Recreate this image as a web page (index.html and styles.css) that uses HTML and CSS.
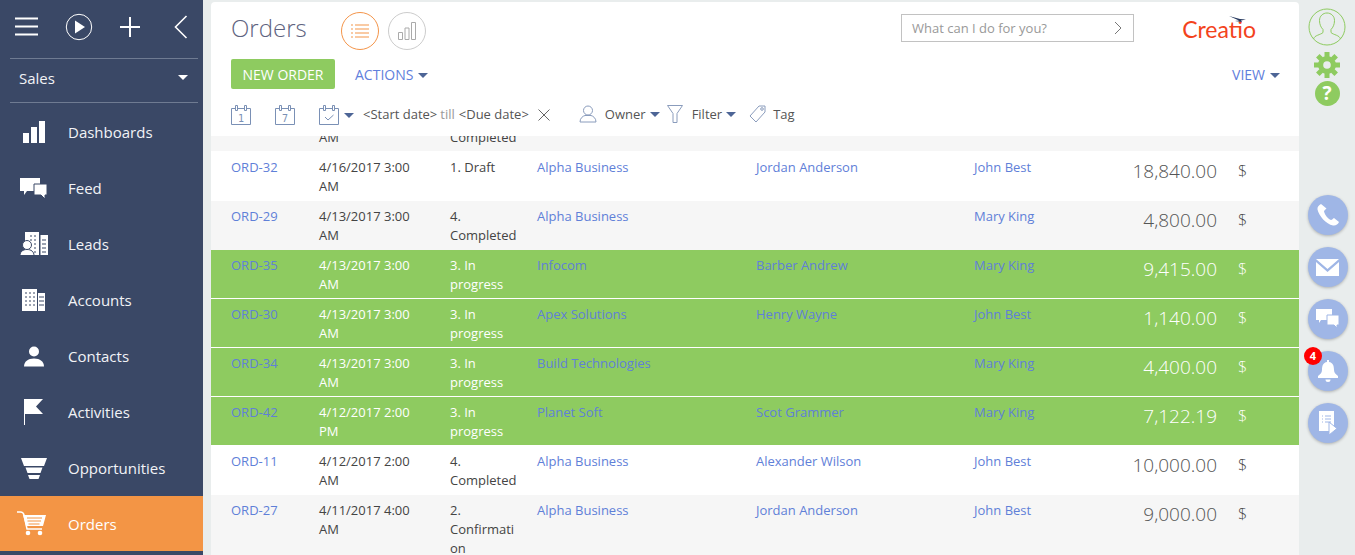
FILE: index.html
```html
<!DOCTYPE html>
<html lang="en">
<head>
  <meta charset="UTF-8">
  <title>Orders</title>
  <link rel="stylesheet" href="styles.css">
</head>
<body>
<div class="app">
  <!-- left menu -->
  <aside class="sidebar">
    <div class="side-tools">
      <svg width="24" height="20" viewBox="0 0 24 20"><path d="M0 1.500h23M0 9.500h23M0 17.500h23" stroke="#fff" stroke-width="2"/></svg>
      <svg class="tool-play" width="28" height="28" viewBox="0 0 28 28"><circle cx="14" cy="14" r="12.700" fill="none" stroke="#fff" stroke-width="1"/><path d="M10 7.500 20 14 10 20.500z" fill="#fff"/></svg>
      <svg class="tool-plus" width="22" height="22" viewBox="0 0 22 22"><path d="M11 1v20M1 11h20" stroke="#fff" stroke-width="2"/></svg>
      <svg class="tool-back" width="14" height="24" viewBox="0 0 14 24"><path d="M12.500 1 1.500 12l11 11" fill="none" stroke="#fff" stroke-width="1.600"/></svg>
    </div>
    <div class="workplace"><span>Sales</span><i class="caret caret-white"></i></div>
    <nav class="menu">
      <a class="menu-item"><span class="menu-icon"><svg width="24" height="24" viewBox="0 0 24 24"><path d="M1 13h6v10H1zM9 7h6v16H9zM17 1h6v22h-6z" fill="#fff"/></svg></span>Dashboards</a>
      <a class="menu-item"><span class="menu-icon"><svg width="28" height="22" viewBox="0 0 28 22"><path d="M0 1h20v13H7l-3 4v-4H0z" fill="#fff"/><path d="M14 7h13v11h-2v4l-4-4h-7z" fill="#fff" stroke="#3a4866" stroke-width="1"/></svg></span>Feed</a>
      <a class="menu-item"><span class="menu-icon"><svg width="28" height="24" viewBox="0 0 28 24"><path d="M5 0h14v23H5zM20.500 3H28v20h-7.500z" fill="#fff"/><path d="M10 4h2M14 4h2M10 8h2M14 8h2M14 12h2M14 16h2M14 20h2M22 8h4M22 12h4M22 16h4M22 20h4" stroke="#3a4866" stroke-width="1.200"/><circle cx="7" cy="13" r="4.500" fill="#fff" stroke="#3a4866"/><path d="M0 23.500c0-4 3-6 7-6s7 2 7 6z" fill="#fff" stroke="#3a4866"/></svg></span>Leads</a>
      <a class="menu-item"><span class="menu-icon"><svg width="24" height="23" viewBox="0 0 24 23"><path d="M0 0h15v22H0zM16 4h7v18h-7z" fill="#fff"/><path d="M3 4h2M7 4h2M11 4h2M3 8h2M7 8h2M11 8h2M3 12h2M7 12h2M11 12h2M3 16h2M7 16h2M11 16h2M17 8h5M17 12h5M17 16h5" stroke="#3a4866" stroke-width="1"/></svg></span>Accounts</a>
      <a class="menu-item"><span class="menu-icon"><svg width="20" height="21" viewBox="0 0 20 21"><circle cx="10" cy="5.500" r="5" fill="#fff"/><path d="M0 20.500c0-5 4-8 10-8s10 3 10 8z" fill="#fff"/></svg></span>Contacts</a>
      <a class="menu-item"><span class="menu-icon"><svg width="20" height="26" viewBox="0 0 20 26"><path d="M0 0h1v26H0z" fill="#fff"/><path d="M1 0h18l-7 7.500 7 7.500H1z" fill="#fff"/></svg></span>Activities</a>
      <a class="menu-item"><span class="menu-icon"><svg width="26" height="21" viewBox="0 0 26 21"><path d="M0 0h26l-3 8H3zM4.500 9.500h17L19.500 15h-13zM7 17h12l-1.500 4h-9z" fill="#fff"/></svg></span>Opportunities</a>
      <a class="menu-item active"><span class="menu-icon icon-cart"><svg width="29" height="25" viewBox="0 0 29 25"><path d="M0 1h3.500c2 0 3 1 3.500 3l3 14h15" fill="none" stroke="#fff" stroke-width="1.500"/><path d="M6 4h23l-3 11H9z" fill="#fff"/><path d="M10 7h15M10.500 10h13.500M11.500 13h11" stroke="#f39545" stroke-width="1.200"/><circle cx="11" cy="22" r="2.300" fill="#fff"/><circle cx="23" cy="22" r="2.300" fill="#fff"/></svg></span>Orders</a>
    </nav>
  </aside>

  <main class="content">
    <header class="page-head">
      <div class="head-top">
        <h1>Orders</h1>
        <span class="view-btn view-on"><svg width="18" height="14" viewBox="0 0 18 14"><path d="M0 1h2M0 5h2M0 9h2M0 13h2M4 1h14M4 5h14M4 9h14M4 13h14" stroke="#f4954a" stroke-width="1.200"/></svg></span>
        <span class="view-btn"><svg width="18" height="18" viewBox="0 0 18 18"><path d="M.5 10.500h4v7h-4zM7 6h4v11.500H7zM13.500.5h4v17h-4z" fill="none" stroke="#aaa"/></svg></span>
        <div class="search-box"><span>What can I do for you?</span><svg width="8" height="14" viewBox="0 0 8 14"><path d="M1 1l6 6-6 6" fill="none" stroke="#777"/></svg></div>
        <div class="logo">
          <svg width="17" height="7" viewBox="0 0 17 7"><path d="M0 0 11 3l6 .5-5 1 1 1.500-7-1 4-.5z" fill="#26395f"/></svg>
          <span>Creatio</span>
        </div>
      </div>
      <div class="head-actions">
        <button class="btn-new">NEW ORDER</button>
        <a class="link-menu">ACTIONS<i class="caret"></i></a>
        <a class="link-menu link-view">VIEW<i class="caret"></i></a>
      </div>
      <div class="filters">
        <svg class="cal" width="20" height="20" viewBox="0 0 20 20"><path d="M.5 3.500h19v16H.5z" fill="none" stroke="#7a90b5"/><path d="M4.500.5h2v5h-2zM13.500.5h2v5h-2z" fill="#fff" stroke="#7a90b5"/><text x="10" y="16.500" text-anchor="middle" class="cal-num">1</text></svg>
        <svg class="cal" width="20" height="20" viewBox="0 0 20 20"><path d="M.5 3.500h19v16H.5z" fill="none" stroke="#7a90b5"/><path d="M4.500.5h2v5h-2zM13.500.5h2v5h-2z" fill="#fff" stroke="#7a90b5"/><text x="10" y="16.500" text-anchor="middle" class="cal-num">7</text></svg>
        <svg class="cal" width="20" height="20" viewBox="0 0 20 20"><path d="M.5 3.500h19v16H.5zM6 12l3 3 5.500-5" fill="none" stroke="#7a90b5"/><path d="M4.500.5h2v5h-2zM13.500.5h2v5h-2z" fill="#fff" stroke="#7a90b5"/></svg>
        <i class="caret caret-cal"></i>
        <span class="dates">&lt;Start date&gt;<em>till</em>&lt;Due date&gt;</span>
        <svg class="clear" width="12" height="12" viewBox="0 0 12 12"><path d="M.5.5l11 11M11.500.5l-11 11" stroke="#666"/></svg>
        <span class="filter-item filter-owner"><svg width="18" height="18" viewBox="0 0 18 18"><circle cx="9" cy="5.500" r="4.500" fill="none" stroke="#8a9cbc"/><path d="M1 17c0-4 3-6 5-6.500h6c2 .5 5 2.500 5 6.500z" fill="none" stroke="#8a9cbc"/></svg>Owner<i class="caret"></i></span>
        <span class="filter-item"><svg width="16" height="18" viewBox="0 0 16 18"><path d="M.5.5h15l-5.500 8v9H6v-9z" fill="none" stroke="#8a9cbc"/></svg>Filter<i class="caret"></i></span>
        <span class="filter-item filter-tag"><svg width="17" height="18" viewBox="0 0 17 18"><path d="M10 1h6v6l-9 10-6-6z" fill="none" stroke="#8a9cbc"/><circle cx="13" cy="4" r="1.300" fill="none" stroke="#8a9cbc"/></svg>Tag</span>
      </div>
    </header>

    <!-- orders grid, scrolled part way down -->
    <section class="grid-wrap">
      <div class="grid">
        <div class="row alt"><a>ORD-28</a><span>4/17/2017 3:00 AM</span><span>4. Completed</span><a>Alpha Business</a><a>Jordan Anderson</a><a>John Best</a><b>1,000.00</b><span>$</span></div>
        <div class="row"><a>ORD-32</a><span>4/16/2017 3:00 AM</span><span>1. Draft</span><a>Alpha Business</a><a>Jordan Anderson</a><a>John Best</a><b>18,840.00</b><span>$</span></div>
        <div class="row alt"><a>ORD-29</a><span>4/13/2017 3:00 AM</span><span>4. Completed</span><a>Alpha Business</a><a></a><a>Mary King</a><b>4,800.00</b><span>$</span></div>
        <div class="row hot"><a>ORD-35</a><span>4/13/2017 3:00 AM</span><span>3. In progress</span><a>Infocom</a><a>Barber Andrew</a><a>Mary King</a><b>9,415.00</b><span>$</span></div>
        <div class="row hot"><a>ORD-30</a><span>4/13/2017 3:00 AM</span><span>3. In progress</span><a>Apex Solutions</a><a>Henry Wayne</a><a>John Best</a><b>1,140.00</b><span>$</span></div>
        <div class="row hot"><a>ORD-34</a><span>4/13/2017 3:00 AM</span><span>3. In progress</span><a>Build Technologies</a><a></a><a>Mary King</a><b>4,400.00</b><span>$</span></div>
        <div class="row hot"><a>ORD-42</a><span>4/12/2017 2:00 PM</span><span>3. In progress</span><a>Planet Soft</a><a>Scot Grammer</a><a>Mary King</a><b>7,122.19</b><span>$</span></div>
        <div class="row"><a>ORD-11</a><span>4/12/2017 2:00 AM</span><span>4. Completed</span><a>Alpha Business</a><a>Alexander Wilson</a><a>John Best</a><b>10,000.00</b><span>$</span></div>
        <div class="row alt"><a>ORD-27</a><span>4/11/2017 4:00 AM</span><span>2. Confirmation</span><a>Alpha Business</a><a>Jordan Anderson</a><a>John Best</a><b>9,000.00</b><span>$</span></div>
      </div>
    </section>
  </main>

  <!-- right rail -->
  <aside class="rail">
    <svg class="rail-profile" width="38" height="38" viewBox="0 0 38 38"><circle cx="19" cy="19" r="18" fill="none" stroke="#8ecb60" stroke-width="1"/><path d="M5.500 31c1-4 7-4 9.500-6.500v-3c-2-2-3.500-5-3.500-9C11.500 8 15 5 19 5s7.500 3 7.500 7.500c0 4-1.500 7-3.500 9v3c2.500 2.500 8.500 2.500 9.500 6.500" fill="none" stroke="#8ecb60"/></svg>
    <svg class="rail-gear" width="26" height="26" viewBox="0 0 26 26">
      <g fill="#8ecb60">
        <circle cx="13" cy="13" r="9"/>
        <path id="tooth" d="M10.500 0h5v5h-5z"/>
        <path d="M10.500 21h5v5h-5zM0 10.500h5v5H0zM21 10.500h5v5h-5z"/>
        <path d="M10.500 0h5v5h-5zM10.500 21h5v5h-5zM0 10.500h5v5H0zM21 10.500h5v5h-5z" transform="rotate(45 13 13)"/>
      </g>
      <circle cx="13" cy="13" r="3.800" fill="#e9eded"/>
    </svg>
    <span class="rail-help">?</span>
    <div class="rail-actions">
      <span class="round"><svg width="24" height="24" viewBox="0 0 24 24"><path d="M5 1C3 2 1 4 1.500 6.500 3 13 10 21 17 22.500c2.500.5 5-1 6-3.500l-5-4c-1 .5-2 2-3 2-3-1-6-5-7-8.500 0-1 1.500-2 2.500-3z" fill="#fff"/></svg></span>
      <span class="round"><svg width="24" height="17" viewBox="0 0 24 17"><path d="M0 0h23l-11.500 10zM0 3l11.500 10L23 3v14H0z" fill="#fff"/></svg></span>
      <span class="round"><svg width="24" height="20" viewBox="0 0 24 20"><path d="M0 0h16v11H5l-2 3v-3H0z" fill="#fff"/><path d="M11 6h12v10h-2v3l-3-3h-7z" fill="#fff" stroke="#9fb6e6"/></svg></span>
      <span class="round round-bell"><svg width="20" height="23" viewBox="0 0 20 23"><path d="M9 0h2v2c4 .5 5 4 5 8 0 3 2 4 4 6v2H0v-2c2-2 4-3 4-6 0-4 1-7.500 5-8zM7.500 19.500h5a2.500 2.500 0 0 1-5 0z" fill="#fff"/></svg><em class="badge">4</em></span>
      <span class="round"><svg class="doc-icon" width="18" height="25" viewBox="0 0 18 25"><path d="M0 0h15v20H0z" fill="#fff"/><path d="M3 5h1M6 5h6M3 8h1M6 8h6M3 11h1M6 11h6" stroke="#9fb6e6"/><path d="M10 11l8 6.500-8 6.500z" fill="#fff" stroke="#9fb6e6" stroke-width="1"/></svg></span>
    </div>
  </aside>
</div>
</body>
</html>
```

FILE: styles.css
```css
* {
  box-sizing: border-box;
}
html, body {
  height: 100%;
}
body {
  margin: 0;
  overflow: hidden;
  font-family: "Open Sans", Arial, sans-serif;
  font-size: 13px;
  color: #444;
  background-color: #e9eded;
}
.app {
  display: flex;
  height: 555px;
}
em {
  font-style: normal;
}

/* caret */
.caret {
  display: inline-block;
  width: 0;
  height: 0;
  margin-left: 5px;
  border-left: 5px solid transparent;
  border-right: 5px solid transparent;
  border-top: 5px solid #4d6596;
  vertical-align: 2px;
}
.caret-white {
  border-left-width: 5.5px;
  border-right-width: 5.5px;
  border-top-color: #fff;
}

/* sidebar */
.sidebar {
  flex: 0 0 203px;
  margin-right: 8px;
  background-color: #3a4866;
  color: #f2f3f6;
}
.side-tools {
  display: flex;
  align-items: center;
  height: 59px;
  margin: 0 5px 0 10px;
  padding: 0 9px 5px 5px;
  border-bottom: 1px solid #6f7b92;
}
.tool-play {
  margin-left: 26px;
}
.tool-plus {
  margin-left: 26px;
}
.tool-back {
  margin-left: 33px;
}
.workplace {
  display: flex;
  align-items: center;
  justify-content: space-between;
  height: 44px;
  margin: 0 5px 0 10px;
  padding: 0 10px 6px 9px;
  font-size: 15px;
  border-bottom: 1px solid #6f7b92;
}
.menu {
  display: flex;
  flex-direction: column;
  margin-top: 1px;
}
.menu-item {
  display: flex;
  align-items: center;
  height: 56px;
  font-size: 15px;
}
.menu-icon {
  display: flex;
  align-items: center;
  justify-content: center;
  flex: 0 0 68px;
  padding-right: 1px;
}
.menu-item.active {
  height: 55px;
  background-color: #f39545;
  color: #fff;
}
.icon-cart {
  padding-right: 6px;
}

/* page header */
.content {
  flex: 1;
  min-width: 0;
  margin-top: 2px;
  background-color: #fff;
  border-radius: 4px 4px 0 0;
  display: flex;
  flex-direction: column;
}
.page-head {
  flex: 0 0 134px;
  padding: 0 20px;
}
.head-top {
  display: flex;
  align-items: center;
  height: 57px;
}
h1 {
  margin: -6px 34px 0 0;
  font-size: 24px;
  font-weight: 300;
  color: #5e6380;
  line-height: 52px;
}
.view-btn {
  display: flex;
  align-items: center;
  justify-content: center;
  width: 38px;
  height: 38px;
  margin-right: 9px;
  border: 1px solid #ccc;
  border-radius: 50%;
}
.view-on {
  border-color: #f4954a;
}
.search-box {
  display: flex;
  align-items: center;
  justify-content: space-between;
  width: 233px;
  height: 28px;
  margin: -5px 0 0 auto;
  padding: 0 11px 0 10px;
  border: 1px solid #c2c2c2;
  color: #999;
}
.logo {
  position: relative;
  width: 145px;
  text-align: right;
  margin-top: -3px;
  padding-right: 23px;
  font-family: Lato, "Open Sans", sans-serif;
  font-size: 23px;
  line-height: 30px;
  color: #f3431c;
}
.logo svg {
  position: absolute;
  top: 2px;
  right: 33px;
}
.head-actions {
  display: flex;
  align-items: center;
  height: 30px;
}
.btn-new {
  width: 104px;
  height: 30px;
  border: none;
  border-radius: 2px;
  background-color: #8ecb60;
  color: #fff;
  font-family: inherit;
  font-size: 14px;
  padding: 0;
}
.link-menu {
  margin-left: 20px;
  font-size: 14px;
  color: #5f80dc;
}
.link-view {
  margin-left: auto;
  margin-right: -1px;
}
.filters {
  display: flex;
  align-items: center;
  height: 24px;
  margin-top: 14px;
  color: #555;
}
.cal {
  margin-right: 24px;
}
.cal:nth-of-type(3) {
  margin-right: 0;
}
.cal-num {
  font-family: "DejaVu Sans Mono", monospace;
  font-size: 10px;
  fill: #7a90b5;
}
.caret-cal {
  margin-left: 5px;
}
.dates {
  margin: -2px 0 0 9px;
}
.dates em {
  margin: 0 4px 0 3px;
  color: #999;
}
.clear {
  margin-left: 9px;
}
.filter-item {
  display: flex;
  align-items: center;
  margin: -2px 0 0 7px;
}
.filter-item svg {
  margin-right: 9px;
}
.filter-item .caret {
  margin-left: 4px;
  vertical-align: 0;
}
.filter-owner {
  margin-left: 29px;
}
.filter-owner svg {
  margin-right: 8px;
}
.filter-tag {
  margin-left: 13px;
}
.filter-tag svg {
  margin-right: 7px;
}

/* grid */
.grid-wrap {
  flex: 1;
  overflow: hidden;
}
.grid {
  margin-top: -34px;
}
.row {
  display: grid;
  grid-template-columns: 88px 131px 87px 219px 218px 120px 123px 1fr;
  min-height: 49px;
  padding: 6px 0 0 20px;
  line-height: 19px;
}
.row:nth-child(-n+2) {
  padding-top: 7px;
}
.row:nth-child(2) {
  min-height: 50px;
}
.row.alt {
  background-color: #f6f6f6;
}
.row.hot {
  background-color: #8ecb60;
  border-bottom: 1px solid #fff;
  color: #fff;
}
.row a {
  color: #5f80d8;
}
.row > span:nth-child(2) {
  padding-right: 20px;
}
.row > span:nth-child(3) {
  padding-right: 16px;
  overflow-wrap: anywhere;
}
.row b {
  padding-top: 4px;
  font-size: 19px;
  font-weight: 300;
  text-align: right;
  color: #555;
}
.row.hot b {
  color: #fff;
}
.row > span:last-child {
  padding: 4px 0 0 21px;
  font-size: 16px;
  font-weight: 300;
}

/* right rail */
.rail {
  flex: 0 0 56px;
  display: flex;
  flex-direction: column;
  align-items: center;
  padding: 8px 0 0 0;
}
.rail-gear {
  margin-top: 6px;
}
.rail-help {
  width: 25px;
  height: 25px;
  margin-top: 3px;
  border-radius: 50%;
  background-color: #8ecb60;
  color: #fff;
  font-size: 19px;
  font-weight: 700;
  line-height: 25px;
  text-align: center;
}
.rail-actions {
  display: flex;
  flex-direction: column;
  gap: 12px;
  margin: 89px 0 0 2px;
}
.round {
  position: relative;
  display: flex;
  align-items: center;
  justify-content: center;
  width: 40px;
  height: 40px;
  border-radius: 50%;
  background-color: #9fb6e6;
  box-shadow: 0 1px 3px rgba(0,0,0,0.25);
}
.badge {
  position: absolute;
  top: -4px;
  left: -4px;
  width: 18px;
  height: 18px;
  border-radius: 50%;
  background-color: #f00;
  color: #fff;
  font-size: 11px;
  font-weight: 700;
  line-height: 18px;
  text-align: center;
}
```
